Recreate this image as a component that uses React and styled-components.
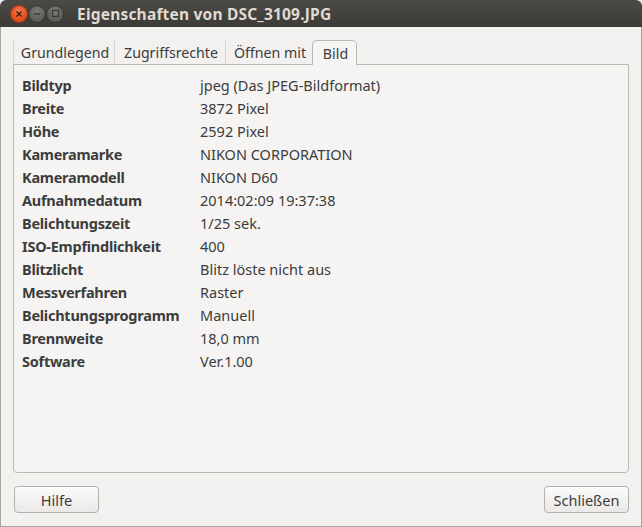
import React from "react";
import styled, { createGlobalStyle } from "styled-components";

const Global = createGlobalStyle`
  html, body { margin: 0; padding: 0; background: #f2f1f0; }
  body { font-family: "Noto Sans", "Open Sans", sans-serif; }
`;

const Window = styled.div`
  width: 642px;
  height: 527px;
  display: flex;
  flex-direction: column;
  box-sizing: border-box;
`;

const TitleBar = styled.div`
  height: 27px;
  flex: none;
  display: flex;
  align-items: center;
  background: linear-gradient(#4b4a45, #3c3b37);
  border-radius: 6px 6px 0 0;
  padding-left: 10px;
  box-sizing: border-box;
`;

const WinButtons = styled.div`
  display: flex;
  align-items: center;
`;

const WinBtn = styled.div`
  width: 18px;
  height: 18px;
  border-radius: 50%;
  display: flex;
  align-items: center;
  justify-content: center;
  background: ${(p) =>
    p.$close
      ? "radial-gradient(circle at 50% 35%, #f47a4e, #de4a16 70%)"
      : "radial-gradient(circle at 50% 35%, #7b7a75, #5c5b56 70%)"};
  border: 1px solid ${(p) => (p.$close ? "#9c3a14" : "#34332f")};
  box-sizing: border-box;
`;

const Title = styled.div`
  margin-left: 13px;
  color: #dfdbd2;
  font-weight: bold;
  font-size: 15.5px;
  letter-spacing: 0.2px;
`;

const Body = styled.div`
  flex: 1;
  display: flex;
  flex-direction: column;
  background: #f2f1f0;
  border: 1px solid #a7a5a0;
  border-top: none;
  padding: 13px 12px 13px 12px;
  box-sizing: border-box;
`;

const TabRow = styled.div`
  display: flex;
  height: 24px;
  align-items: flex-end;
  position: relative;
  z-index: 1;
`;

const Tab = styled.div`
  width: ${(p) => p.$w}px;
  height: 23px;
  box-sizing: border-box;
  display: flex;
  align-items: center;
  justify-content: center;
  padding-left: 2px;
  font-size: 14.2px;
  white-space: nowrap;
  color: #3c3c3c;
  ${(p) =>
    p.$active
      ? `
    background: #f6f5f4;
    border: 1px solid #bcb9b4;
    border-bottom: none;
    border-radius: 5px 5px 0 0;
    margin-bottom: -1px;
    height: 25px;
  `
      : `
    border-left: 1px solid #d6d4d0;
  `}
`;

const Panel = styled.div`
  flex: 1;
  border: 1px solid #bcb9b4;
  border-radius: 0 0 4px 4px;
  background: #f5f4f3;
  padding: 8px 8px;
  box-sizing: border-box;
`;

const Grid = styled.div`
  display: grid;
  grid-template-columns: 178px 1fr;
  grid-auto-rows: 23px;
  align-items: center;
  font-size: 14.5px;
  color: #3c3c3c;
`;

const Label = styled.div`
  font-weight: bold;
  letter-spacing: -0.25px;
  white-space: nowrap;
`;

const Value = styled.div`
  white-space: nowrap;
`;

const Footer = styled.div`
  display: flex;
  justify-content: space-between;
  margin-top: 13px;
  padding-left: 1px;
`;

const Button = styled.button`
  width: 85px;
  height: 27px;
  font-family: inherit;
  font-size: 14.5px;
  color: #3c3c3c;
  background: linear-gradient(#fbfbfa, #ebe9e7);
  border: 1px solid #b3b0ab;
  border-radius: 4px;
  padding: 0;
  box-shadow: inset 0 1px 0 #ffffff;
`;

const rows = [
  ["Bildtyp", "jpeg (Das JPEG-Bildformat)"],
  ["Breite", "3872 Pixel"],
  ["Höhe", "2592 Pixel"],
  ["Kameramarke", "NIKON CORPORATION"],
  ["Kameramodell", "NIKON D60"],
  ["Aufnahmedatum", "2014:02:09 19:37:38"],
  ["Belichtungszeit", "1/25 sek."],
  ["ISO-Empfindlichkeit", "400"],
  ["Blitzlicht", "Blitz löste nicht aus"],
  ["Messverfahren", "Raster"],
  ["Belichtungsprogramm", "Manuell"],
  ["Brennweite", "18,0 mm"],
  ["Software", "Ver.1.00"],
];

const tabs = [
  ["Grundlegend", 101],
  ["Zugriffsrechte", 111],
  ["Öffnen mit", 87],
  ["Bild", 45, true],
];

export default function App() {
  return (
    <Window>
      <Global />
      <TitleBar>
        <WinButtons>
          <WinBtn $close>
            <svg width="8" height="8" viewBox="0 0 8 8">
              <path d="M1.5 1.5 L6.5 6.5 M6.5 1.5 L1.5 6.5" stroke="#3a1a0c" strokeWidth="1.4" />
            </svg>
          </WinBtn>
          <WinBtn>
            <svg width="8" height="8" viewBox="0 0 8 8">
              <path d="M1 4 H7" stroke="#3a3935" strokeWidth="1.4" />
            </svg>
          </WinBtn>
          <WinBtn>
            <svg width="9" height="9" viewBox="0 0 9 9">
              <rect x="1.5" y="1.5" width="6" height="6" fill="none" stroke="#3a3935" strokeWidth="1.2" />
            </svg>
          </WinBtn>
        </WinButtons>
        <Title>Eigenschaften von DSC_3109.JPG</Title>
      </TitleBar>
      <Body>
        <TabRow>
          {tabs.map(([t, w, a]) => (
            <Tab key={t} $w={w} $active={a}>
              {t}
            </Tab>
          ))}
        </TabRow>
        <Panel>
          <Grid>
            {rows.map(([l, v]) => (
              <React.Fragment key={l}>
                <Label>{l}</Label>
                <Value>{v}</Value>
              </React.Fragment>
            ))}
          </Grid>
        </Panel>
        <Footer>
          <Button>Hilfe</Button>
          <Button>Schließen</Button>
        </Footer>
      </Body>
    </Window>
  );
}
